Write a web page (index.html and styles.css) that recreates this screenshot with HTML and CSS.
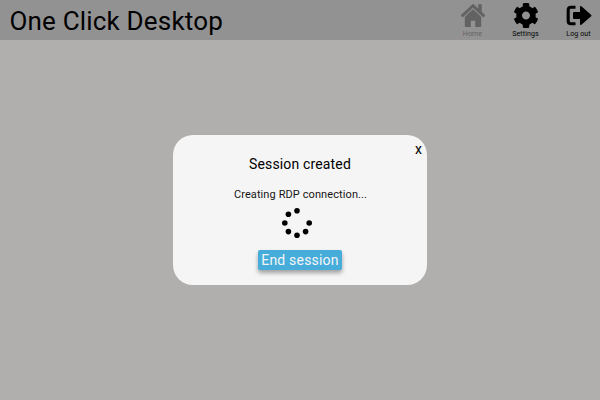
FILE: index.html
```html
<!DOCTYPE html>
<html lang="en">
<head>
<meta charset="utf-8">
<title>One Click Desktop</title>
<link rel="stylesheet" href="styles.css">
</head>
<body>
<header class="topbar">
  <h1 class="brand">One Click Desktop</h1>
  <nav class="nav">
    <a class="nav-item disabled">
      <svg class="icon" viewBox="0 0 26 28"><path d="M13 4 1 15.2l1.6 2L13 7.6l10.4 9.6 1.6-2-3.5-3.3V4.5h-3v4.6z" stroke="currentColor" stroke-width=".5" stroke-linejoin="round"/><path d="M13 9.2 4.8 16.8V26q0 1 1 1h5v-6.3h4.4V27h5q1 0 1-1v-9.2z"/></svg>
      <span>Home</span>
    </a>
    <a class="nav-item">
      <svg class="icon" viewBox="0 0 26 28"><path transform="translate(.1 2.6) scale(.0504)" d="M487.4 315.7l-42.6-24.6c4.3-23.2 4.3-47 0-70.2l42.6-24.6c4.9-2.8 7.1-8.6 5.5-14-11.1-35.6-30-67.8-54.7-94.6-3.8-4.1-10-5.1-14.8-2.3L380.8 110c-17.9-15.4-38.5-27.3-60.8-35.1V25.8c0-5.6-3.9-10.5-9.4-11.7-36.7-8.2-74.3-7.8-109.2 0-5.5 1.2-9.4 6.1-9.4 11.7V75c-22.2 7.9-42.8 19.8-60.8 35.1L88.7 85.5c-4.9-2.8-11-1.9-14.8 2.3-24.7 26.7-43.6 58.9-54.7 94.6-1.7 5.4.6 11.2 5.5 14L67.3 221c-4.3 23.2-4.3 47 0 70.2l-42.6 24.6c-4.9 2.8-7.1 8.6-5.5 14 11.1 35.6 30 67.8 54.7 94.6 3.8 4.1 10 5.1 14.8 2.3l42.6-24.6c17.9 15.4 38.5 27.3 60.8 35.1v49.2c0 5.6 3.9 10.5 9.4 11.7 36.7 8.2 74.3 7.8 109.2 0 5.5-1.2 9.4-6.1 9.4-11.7v-49.2c22.2-7.9 42.8-19.8 60.8-35.1l42.6 24.6c4.9 2.8 11 1.9 14.8-2.3 24.7-26.7 43.6-58.9 54.7-94.6 1.5-5.5-.7-11.3-5.6-14.1zM256 336c-44.1 0-80-35.9-80-80s35.9-80 80-80 80 35.9 80 80-35.9 80-80 80z"/></svg>
      <span>Settings</span>
    </a>
    <a class="nav-item">
      <svg class="icon" viewBox="0 0 26 28"><path d="M9.5 7.3H5Q2.2 7.3 2.2 10.1V20.9Q2.2 23.7 5 23.7H9.5" fill="none" stroke="currentColor" stroke-width="3.1"/><path d="M8 12h6V7q0-1.5 1.4-.7L25.2 15q.6.6 0 1.2L15.4 24.7Q14 25.5 14 24v-5H8q-1 0-1-1v-5q0-1 1-1z"/></svg>
      <span>Log out</span>
    </a>
  </nav>
</header>
<main class="overlay">
  <section class="dialog">
    <button class="close">x</button>
    <h2 class="title">Session created</h2>
    <p class="status">Creating RDP connection...</p>
    <svg class="spinner" viewBox="0 0 32 32"><circle cx="16" cy="3.8" r="2.8"/><circle cx="7.4" cy="7.3" r="2.8"/><circle cx="3.8" cy="16" r="2.8"/><circle cx="28.2" cy="16" r="2.8"/><circle cx="7.4" cy="24.6" r="2.8"/><circle cx="24.6" cy="24.6" r="2.8"/><circle cx="16" cy="28.2" r="2.8"/></svg>
    <button class="end">End session</button>
  </section>
</main>
</body>
</html>
```
FILE: styles.css
```css
* { box-sizing: border-box; }
body {
  margin: 0;
  height: 400px;
  overflow: hidden;
  display: flex;
  flex-direction: column;
  background: #b0afad;
  color: #000;
  font-family: Roboto, "Liberation Sans", sans-serif;
}
.topbar {
  height: 40px;
  flex: none;
  display: flex;
  justify-content: space-between;
  background: #929292;
  padding: 0 8.5px 0 9.5px;
}
.brand {
  margin: 0;
  font-size: 26px;
  line-height: 42px;
  font-weight: 400;
  letter-spacing: .18px;
  white-space: nowrap;
}
.nav { display: flex; gap: 27px; }
.nav-item {
  width: 26px;
  display: flex;
  flex-direction: column;
  align-items: center;
  font-size: 7px;
  line-height: 12px;
  letter-spacing: .12px;
  white-space: nowrap;
}
.disabled { color: #626262; }
.icon { width: 26px; height: 28px; flex: none; fill: currentColor; }
.overlay {
  flex: 1;
  display: flex;
  justify-content: center;
  align-items: flex-start;
  padding-top: 95px;
}
.dialog {
  position: relative;
  width: 254px;
  height: 150px;
  border-radius: 20px;
  background: #f5f5f5;
  display: flex;
  flex-direction: column;
  align-items: center;
  padding: 20px 6px 0 0;
}
.close {
  position: absolute;
  top: 6px;
  right: 5px;
  padding: 0;
  border: 0;
  background: none;
  font: 14px/16px Roboto, sans-serif;
  color: #000;
}
.title { margin: 0 0 12px 6px; font-size: 14px; line-height: 19px; font-weight: 400; letter-spacing: .15px; }
.status { margin: 0 0 0 7px; font-size: 11px; line-height: 18px; letter-spacing: .1px; color: #161616; }
.spinner { width: 32px; height: 32px; margin: 3px 0 11px; flex: none; }
.end {
  width: 84px;
  height: 20px;
  margin-left: 6px;
  padding: 0;
  border: 0;
  border-radius: 2px;
  background: #46addb;
  color: #f5f5f5;
  font: 14px/20px Roboto, sans-serif;
  letter-spacing: .2px;
  box-shadow: 0 3px 4px rgba(0, 0, 0, .35);
  white-space: nowrap;
}
```
